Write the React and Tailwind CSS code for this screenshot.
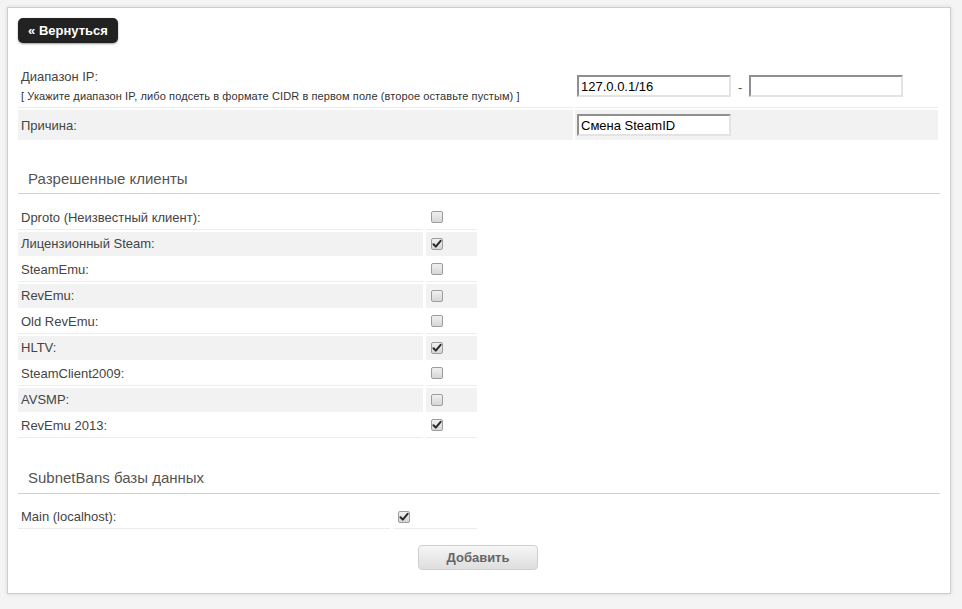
import { useState } from 'react';

const clients = [
  { name: 'Dproto (Неизвестный клиент):', on: false },
  { name: 'Лицензионный Steam:', on: true },
  { name: 'SteamEmu:', on: false },
  { name: 'RevEmu:', on: false },
  { name: 'Old RevEmu:', on: false },
  { name: 'HLTV:', on: true },
  { name: 'SteamClient2009:', on: false },
  { name: 'AVSMP:', on: false },
  { name: 'RevEmu 2013:', on: true },
];

function Check({ checked }) {
  return (
    <span className="inline-flex w-[12px] h-[12px] items-center justify-center rounded-[2px] border border-[#9d9d9d] bg-gradient-to-b from-[#f0f0f0] to-[#d6d6d6]">
      {checked && (
        <svg width="10" height="10" viewBox="0 0 10 10">
          <path d="M1.5 5.2 L3.8 7.6 L8.6 1.8" fill="none" stroke="#2a2a2a" strokeWidth="2" strokeLinecap="round" strokeLinejoin="round" />
        </svg>
      )}
    </span>
  );
}

function SectionTitle({ children, pb }) {
  return (
    <div className={`border-b border-[#d0d0d0] pl-[10px] text-[15px] text-[#555] ${pb}`}>{children}</div>
  );
}

const inputCls =
  'h-[22px] w-[154px] bg-white px-[2px] text-[13px] text-black outline-none border border-t-[#8f8f8f] border-l-[#8f8f8f] border-r-[#e3e3e3] border-b-[#e3e3e3] border-[2px]';

export default function App() {
  const [list, setList] = useState(clients);
  const [range, setRange] = useState('127.0.0.1/16');
  const [range2, setRange2] = useState('');
  const [reason, setReason] = useState('Смена SteamID');

  return (
    <div className="min-h-[609px] bg-[#f4f4f4] p-[7px] font-['Liberation_Sans',Arial,sans-serif]">
      <div className="w-[944px] h-[587px] border border-[#cdcdcd] bg-white px-[10px] pt-[10px] shadow-[0_0_4px_rgba(0,0,0,0.12)]">
        <button className="h-[25px] w-[100px] rounded-[5px] bg-[#222] text-[13px] font-bold text-white shadow-[0_1px_2px_rgba(0,0,0,0.4)]">
          « Вернуться
        </button>

        {/* IP range */}
        <div className="mt-[21px] w-[920px]">
          <div className="flex gap-[2px]">
            <div className="w-[555px] border-b border-[#ececec] pl-[3px] pt-[5px] pb-[4px] text-[#444]">
              <div className="text-[13px] leading-[16px]">Диапазон IP:</div>
              <div className="mt-[5px] text-[11px] leading-[13px] tracking-[0.1px] text-[#333]">
                [ Укажите диапазон IP, либо подсеть в формате CIDR в первом поле (второе оставьте пустым) ]
              </div>
            </div>
            <div className="flex flex-1 items-start border-b border-[#ececec] pl-[2px] pt-[11px]">
              <input className={inputCls} value={range} onChange={e => setRange(e.target.value)} />
              <span className="mx-[7px] mt-[3px] text-[13px] text-[#555]">-</span>
              <input className={inputCls} value={range2} onChange={e => setRange2(e.target.value)} />
            </div>
          </div>
          <div className="mt-[2px] flex h-[30px] gap-[2px]">
            <div className="flex w-[555px] items-center bg-[#f2f2f2] pl-[3px] text-[13px] text-[#444]">Причина:</div>
            <div className="flex flex-1 items-center bg-[#f2f2f2] pl-[2px]">
              <input className={inputCls} value={reason} onChange={e => setReason(e.target.value)} />
            </div>
          </div>
        </div>

        {/* Clients */}
        <div className="mt-[28px] w-[922px]">
          <SectionTitle pb="pb-[2px]">Разрешенные клиенты</SectionTitle>
        </div>
        <div className="mt-[12px] flex w-[459px] flex-col gap-[2px]">
          {list.map((c, i) => (
            <div key={c.name} className="flex h-[24px] gap-[3px]">
              <div className={`flex w-[405px] items-center pl-[3px] text-[13px] text-[#444] ${i % 2 ? 'bg-[#f2f2f2]' : 'border-b border-[#ececec]'}`}>
                {c.name}
              </div>
              <div
                className={`flex flex-1 items-center pl-[5px] ${i % 2 ? 'bg-[#f2f2f2]' : 'border-b border-[#ececec]'}`}
                onClick={() => setList(l => l.map((x, j) => (j === i ? { ...x, on: !x.on } : x)))}
              >
                <Check checked={c.on} />
              </div>
            </div>
          ))}
        </div>

        {/* Databases */}
        <div className="mt-[29px] w-[922px]">
          <SectionTitle pb="pb-[4px]">SubnetBans базы данных</SectionTitle>
        </div>
        <div className="mt-[11px] flex h-[24px] w-[459px] gap-[3px]">
          <div className="flex w-[372px] items-center border-b border-[#ececec] pl-[3px] text-[13px] text-[#444]">Main (localhost):</div>
          <div className="flex flex-1 items-center border-b border-[#ececec] pl-[5px]">
            <Check checked />
          </div>
        </div>

        <div className="mt-[16px] flex justify-center pr-[2px]">
          <button className="h-[25px] w-[120px] rounded-[4px] border border-[#cfcfcf] bg-gradient-to-b from-[#f6f6f6] to-[#dedede] text-[13px] font-bold text-[#666]">
            Добавить
          </button>
        </div>
      </div>
    </div>
  );
}
